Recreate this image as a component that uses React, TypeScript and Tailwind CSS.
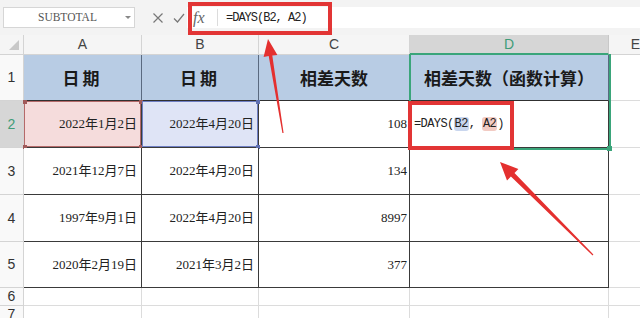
import React from "react";

const serif = { fontFamily: '"Liberation Serif", "Noto Sans CJK SC", serif' };
const cjk = { fontFamily: '"Noto Sans CJK SC", "Noto Sans", sans-serif' };
const sans = { fontFamily: '"Liberation Sans", Arial, sans-serif' };

const rowHeights = ["h-[46px]", "h-[47px]", "h-[47px]", "h-[47px]", "h-[46px]", "h-[18px]", "h-[18px]"];

const data: [string, string, string][] = [
  ["2022年1月2日", "2022年4月20日", "108"],
  ["2021年12月7日", "2022年4月20日", "134"],
  ["1997年9月1日", "2022年4月20日", "8997"],
  ["2020年2月19日", "2021年3月2日", "377"],
];

function Handle({ pos, color }: { pos: string; color: string }) {
  return <div className={`absolute w-[4px] h-[4px] ${pos} ${color}`} />;
}

export default function App() {
  return (
    <div className="relative w-[640px] h-[318px] overflow-hidden bg-white">
      {/* Toolbar */}
      <div className="h-[35px] bg-[#f3f3f3] flex items-center">
        <div className="ml-[3px] w-[132px] h-[21px] bg-white border border-[#d6d6d6] flex items-center relative">
          <span className="ml-[34px] text-[11.5px] text-[#555]" style={serif}>SUBTOTAL</span>
          <span className="absolute right-[3px] top-[8px] w-0 h-0 border-l-[3px] border-r-[3px] border-t-[3px] border-l-transparent border-r-transparent border-t-[#888]" />
        </div>
        <div className="flex items-center ml-[17px] gap-[9px] text-[#666]">
          <svg width="12" height="12" viewBox="0 0 12 12"><path d="M1.5 1.5 L10.5 10.5 M10.5 1.5 L1.5 10.5" stroke="#777" strokeWidth="1.2" fill="none" /></svg>
          <svg width="12" height="12" viewBox="0 0 12 12"><path d="M1 6.5 L4.5 10 L11 2" stroke="#777" strokeWidth="1.2" fill="none" /></svg>
        </div>
        <div className="flex-1 h-[21px] bg-white flex items-center ml-[2px]">
          <span className="ml-[6px] w-[24px] text-[16px] italic text-[#666]" style={serif}>fx</span>
          <span className="w-px h-[17px] bg-[#dcdcdc]" />
          <span className="ml-[8px] text-[12px] tracking-[-1px] text-[#222]" style={{ fontFamily: '"Liberation Mono", monospace' }}>=DAYS(B2, A2)</span>
        </div>
      </div>

      {/* Sheet grid */}
      <div className="grid grid-cols-[24px_118px_117px_151px_199px_54px_100px] w-[763px]">
        {/* Column header row */}
        <div className="h-[20px] bg-[#f5f5f5] border-r border-b border-[#d4d4d4] relative">
          <span className="absolute right-[3px] bottom-[3px] w-0 h-0 border-l-[9px] border-t-[9px] border-l-transparent border-t-transparent border-b-0 border-r-0" style={{ borderBottom: "0", borderLeft: "9px solid transparent", borderTop: "0" }} />
          <svg className="absolute left-[9px] top-[5px]" width="10" height="10" viewBox="0 0 10 10"><path d="M10 0 L10 10 L0 10 Z" fill="#c8c8c8" /></svg>
        </div>
        {["A", "B", "C"].map((c) => (
          <div key={c} className="h-[20px] bg-[#f5f5f5] border-r border-b border-[#d4d4d4] flex items-center justify-center text-[14px] text-[#444]" style={sans}>{c}</div>
        ))}
        <div className="h-[20px] bg-[#d6d6d6] border-r border-b-2 border-r-[#c8c8c8] border-b-[#3aa57a] flex items-center justify-center text-[14px] text-[#3f9c78]" style={sans}>D</div>
        <div className="h-[20px] bg-[#f5f5f5] border-r border-b border-[#d4d4d4] flex items-center justify-center text-[14px] text-[#444]" style={sans}>E</div>
        <div className="h-[20px] bg-[#f5f5f5] border-b border-[#d4d4d4]" />

        {/* Row 1 */}
        <div className={`${rowHeights[0]} bg-[#f9f9f9] border-r border-b border-[#d4d4d4] flex items-center justify-center text-[14px] text-[#333]`} style={sans}>1</div>
        {["日期", "日期", "相差天数", "相差天数（函数计算）"].map((t, i) => (
          <div key={i} className={`${rowHeights[0]} bg-[#b8cce4] border-r border-b border-r-[#5a6a80] border-b-[#303030] flex items-center justify-center text-[17px] font-bold text-[#1a1a1a] ${i < 2 ? "tracking-[3px]" : "tracking-[0px]"}`} style={cjk}>{t}</div>
        ))}
        <div className={`${rowHeights[0]} border-r border-b border-[#dcdcdc]`} />
        <div className={`${rowHeights[0]} border-b border-[#dcdcdc]`} />

        {/* Rows 2-5 */}
        {data.map((r, ri) => {
          const h = rowHeights[ri + 1];
          const sel = ri === 0;
          return (
            <React.Fragment key={ri}>
              <div className={`${h} ${sel ? "bg-[#d6d6d6] text-[#3f9c78]" : "bg-[#f9f9f9] text-[#333]"} border-r border-b border-[#d4d4d4] flex items-center justify-center text-[14px]`} style={sans}>{ri + 2}</div>
              <div className={`${h} relative border-r border-b border-[#3a3a3a] ${sel ? "bg-[#f5dcdc]" : "bg-white"} flex items-center justify-end pr-[4px] text-[13px] text-[#222]`} style={serif}>
                {sel && (
                  <>
                    <div className="absolute inset-0 border border-[#b56a6a]" />
                    <Handle pos="left-[-1px] top-[-1px]" color="bg-[#a05a5a]" />
                    <Handle pos="right-[-2px] top-[-1px]" color="bg-[#a05a5a]" />
                    <Handle pos="left-[-1px] bottom-[-2px]" color="bg-[#a05a5a]" />
                    <Handle pos="right-[-2px] bottom-[-2px]" color="bg-[#a05a5a]" />
                  </>
                )}
                <span className="relative">{r[0]}</span>
              </div>
              <div className={`${h} relative border-r border-b border-[#3a3a3a] ${sel ? "bg-[#dfe4f6]" : "bg-white"} flex items-center justify-end pr-[4px] text-[13px] text-[#222]`} style={serif}>
                {sel && (
                  <>
                    <div className="absolute inset-0 border border-[#6f7fc4]" />
                    <Handle pos="right-[-2px] top-[-1px]" color="bg-[#5f6fb0]" />
                    <Handle pos="right-[-2px] bottom-[-2px]" color="bg-[#5f6fb0]" />
                  </>
                )}
                <span className="relative">{r[1]}</span>
              </div>
              <div className={`${h} border-r border-b border-[#3a3a3a] flex items-center justify-end pr-[2px] text-[13px] text-[#222]`} style={serif}>{r[2]}</div>
              <div className={`${h} border-r border-b border-[#3a3a3a] flex items-center pl-[4px] text-[12px] text-[#222]`} style={{ fontFamily: '"Liberation Mono", monospace' }}>
                {sel && (
                  <span className="tracking-[-0.6px]">
                    =DAYS(<span className="bg-[#c9d6ee] rounded-[3px] px-[1px]">B2</span>, <span className="bg-[#f2cbc3] rounded-[3px] px-[1px]">A2</span>)
                  </span>
                )}
              </div>
              <div className={`${h} border-r border-b border-[#dcdcdc]`} />
              <div className={`${h} border-b border-[#dcdcdc]`} />
            </React.Fragment>
          );
        })}

        {/* Rows 6-7 */}
        {[6, 7].map((n, i) => (
          <React.Fragment key={n}>
            <div className={`${rowHeights[5 + i]} bg-[#f9f9f9] border-r border-b border-[#d4d4d4] flex items-center justify-center text-[14px] text-[#333]`} style={sans}>{n}</div>
            {[0, 1, 2, 3, 4].map((c) => (
              <div key={c} className={`${rowHeights[5 + i]} border-r border-b border-[#dcdcdc]`} />
            ))}
            <div className={`${rowHeights[5 + i]} border-b border-[#dcdcdc]`} />
          </React.Fragment>
        ))}
      </div>

      {/* Selection (green) around D */}
      <div className="absolute left-[409px] top-[54px] w-[202px] h-[96px] border-2 border-[#3aa57a] border-t-0" />
      <div className="absolute left-[607px] top-[146px] w-[5px] h-[5px] bg-[#3aa57a]" />

      {/* Red annotation boxes */}
      <div className="absolute left-[188px] top-[2px] w-[144px] h-[33px] border-4 border-[#e23535]" />
      <div className="absolute left-[408px] top-[101px] w-[106px] h-[49px] border-4 border-[#e23535]" />

      {/* Arrows */}
      <svg className="absolute left-0 top-0" width="640" height="318" viewBox="0 0 640 318">
        <polygon points="268,39 277.4,55 272.3,55.5 283.6,133 282.4,133 268.7,56.1 263.6,57" fill="#e4302f" />
        <polygon points="500,162 518.4,169 514.5,172.9 593.4,254.6 592.6,255.4 510.9,176.5 507,180.4" fill="#e4302f" />
      </svg>
    </div>
  );
}
